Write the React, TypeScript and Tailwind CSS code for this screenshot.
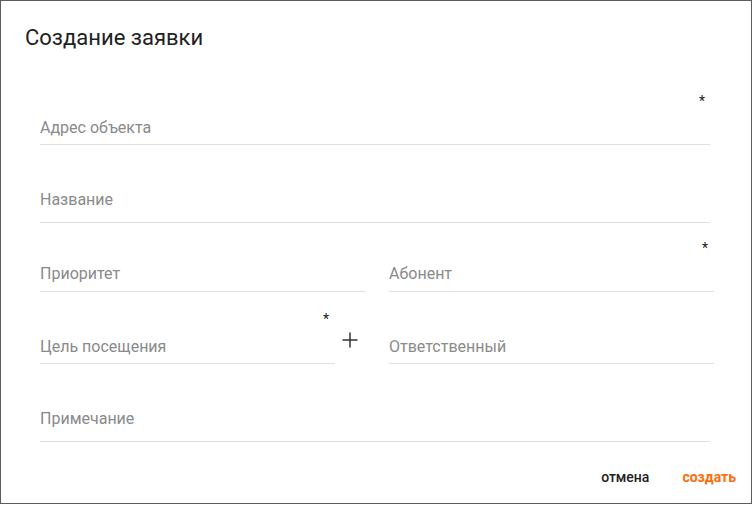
import { Plus } from "lucide-react";

export default function App() {

  return (
    <div className="w-[752px] h-[505px] bg-white" style={{ fontFamily: "Roboto, 'Noto Sans', sans-serif" }}>
      <div className="w-[752px] h-[504px] border border-[#5c5c5c] bg-white flex flex-col">

        <h2 className="pl-[24px] pt-[23px] text-[22px] leading-[28px] text-[#212121]">
          Создание заявки
        </h2>

        <div className="pl-[39px] flex flex-col">

          {/* Адрес */}
          <div className="relative mt-[64px] w-[670px] border-b border-[#e0e0e0] pb-[4px]">
            <span className="absolute left-[659px] top-[-22px] text-[14px] leading-none text-[#212121]">*</span>
            <div className="text-[16px] leading-6 text-[#8a8a8a]">Адрес объекта</div>
          </div>

          {/* Название */}
          <div className="mt-[43px] w-[670px] border-b border-[#e0e0e0] pb-[10px]">
            <div className="text-[16px] leading-6 text-[#8a8a8a]">Название</div>
          </div>

          <div className="mt-[39px] flex gap-[24px]">
            <div className="w-[325px] border-b border-[#e0e0e0] pb-[5px]">
              <div className="text-[16px] leading-6 text-[#8a8a8a]">Приоритет</div>
            </div>
            <div className="relative w-[325px] border-b border-[#e0e0e0] pb-[5px]">
              <span className="absolute left-[313px] top-[-21px] text-[14px] leading-none text-[#212121]">*</span>
              <div className="text-[16px] leading-6 text-[#8a8a8a]">Абонент</div>
            </div>
          </div>

          <div className="mt-[43px] flex">
            <div className="relative w-[295px] border-b border-[#e0e0e0] pb-[4px]">
              <span className="absolute left-[283px] top-[-23px] text-[14px] leading-none text-[#212121]">*</span>
              <div className="text-[16px] leading-6 text-[#8a8a8a]">Цель посещения</div>
            </div>
            <div className="w-[54px] pl-[3px]">
              <Plus size={24} strokeWidth={1.5} className="text-[#333] mt-[-7px]" />
            </div>
            <div className="w-[325px] border-b border-[#e0e0e0] pb-[4px]">
              <div className="text-[16px] leading-6 text-[#8a8a8a]">Ответственный</div>
            </div>
          </div>

          {/* Примечание */}
          <div className="mt-[43px] w-[670px] border-b border-[#e0e0e0] pb-[10px]">
            <div className="text-[16px] leading-6 text-[#8a8a8a]">Примечание</div>
          </div>

        </div>

        <div className="mt-[25px] flex justify-end gap-[33px] pr-[15px]">
          <button className="text-[14px] leading-5 font-medium text-[#212121]">отмена</button>
          <button className="text-[14px] leading-5 font-bold text-[#ff6d0a]">создать</button>
        </div>

      </div>
    </div>
  )
}
